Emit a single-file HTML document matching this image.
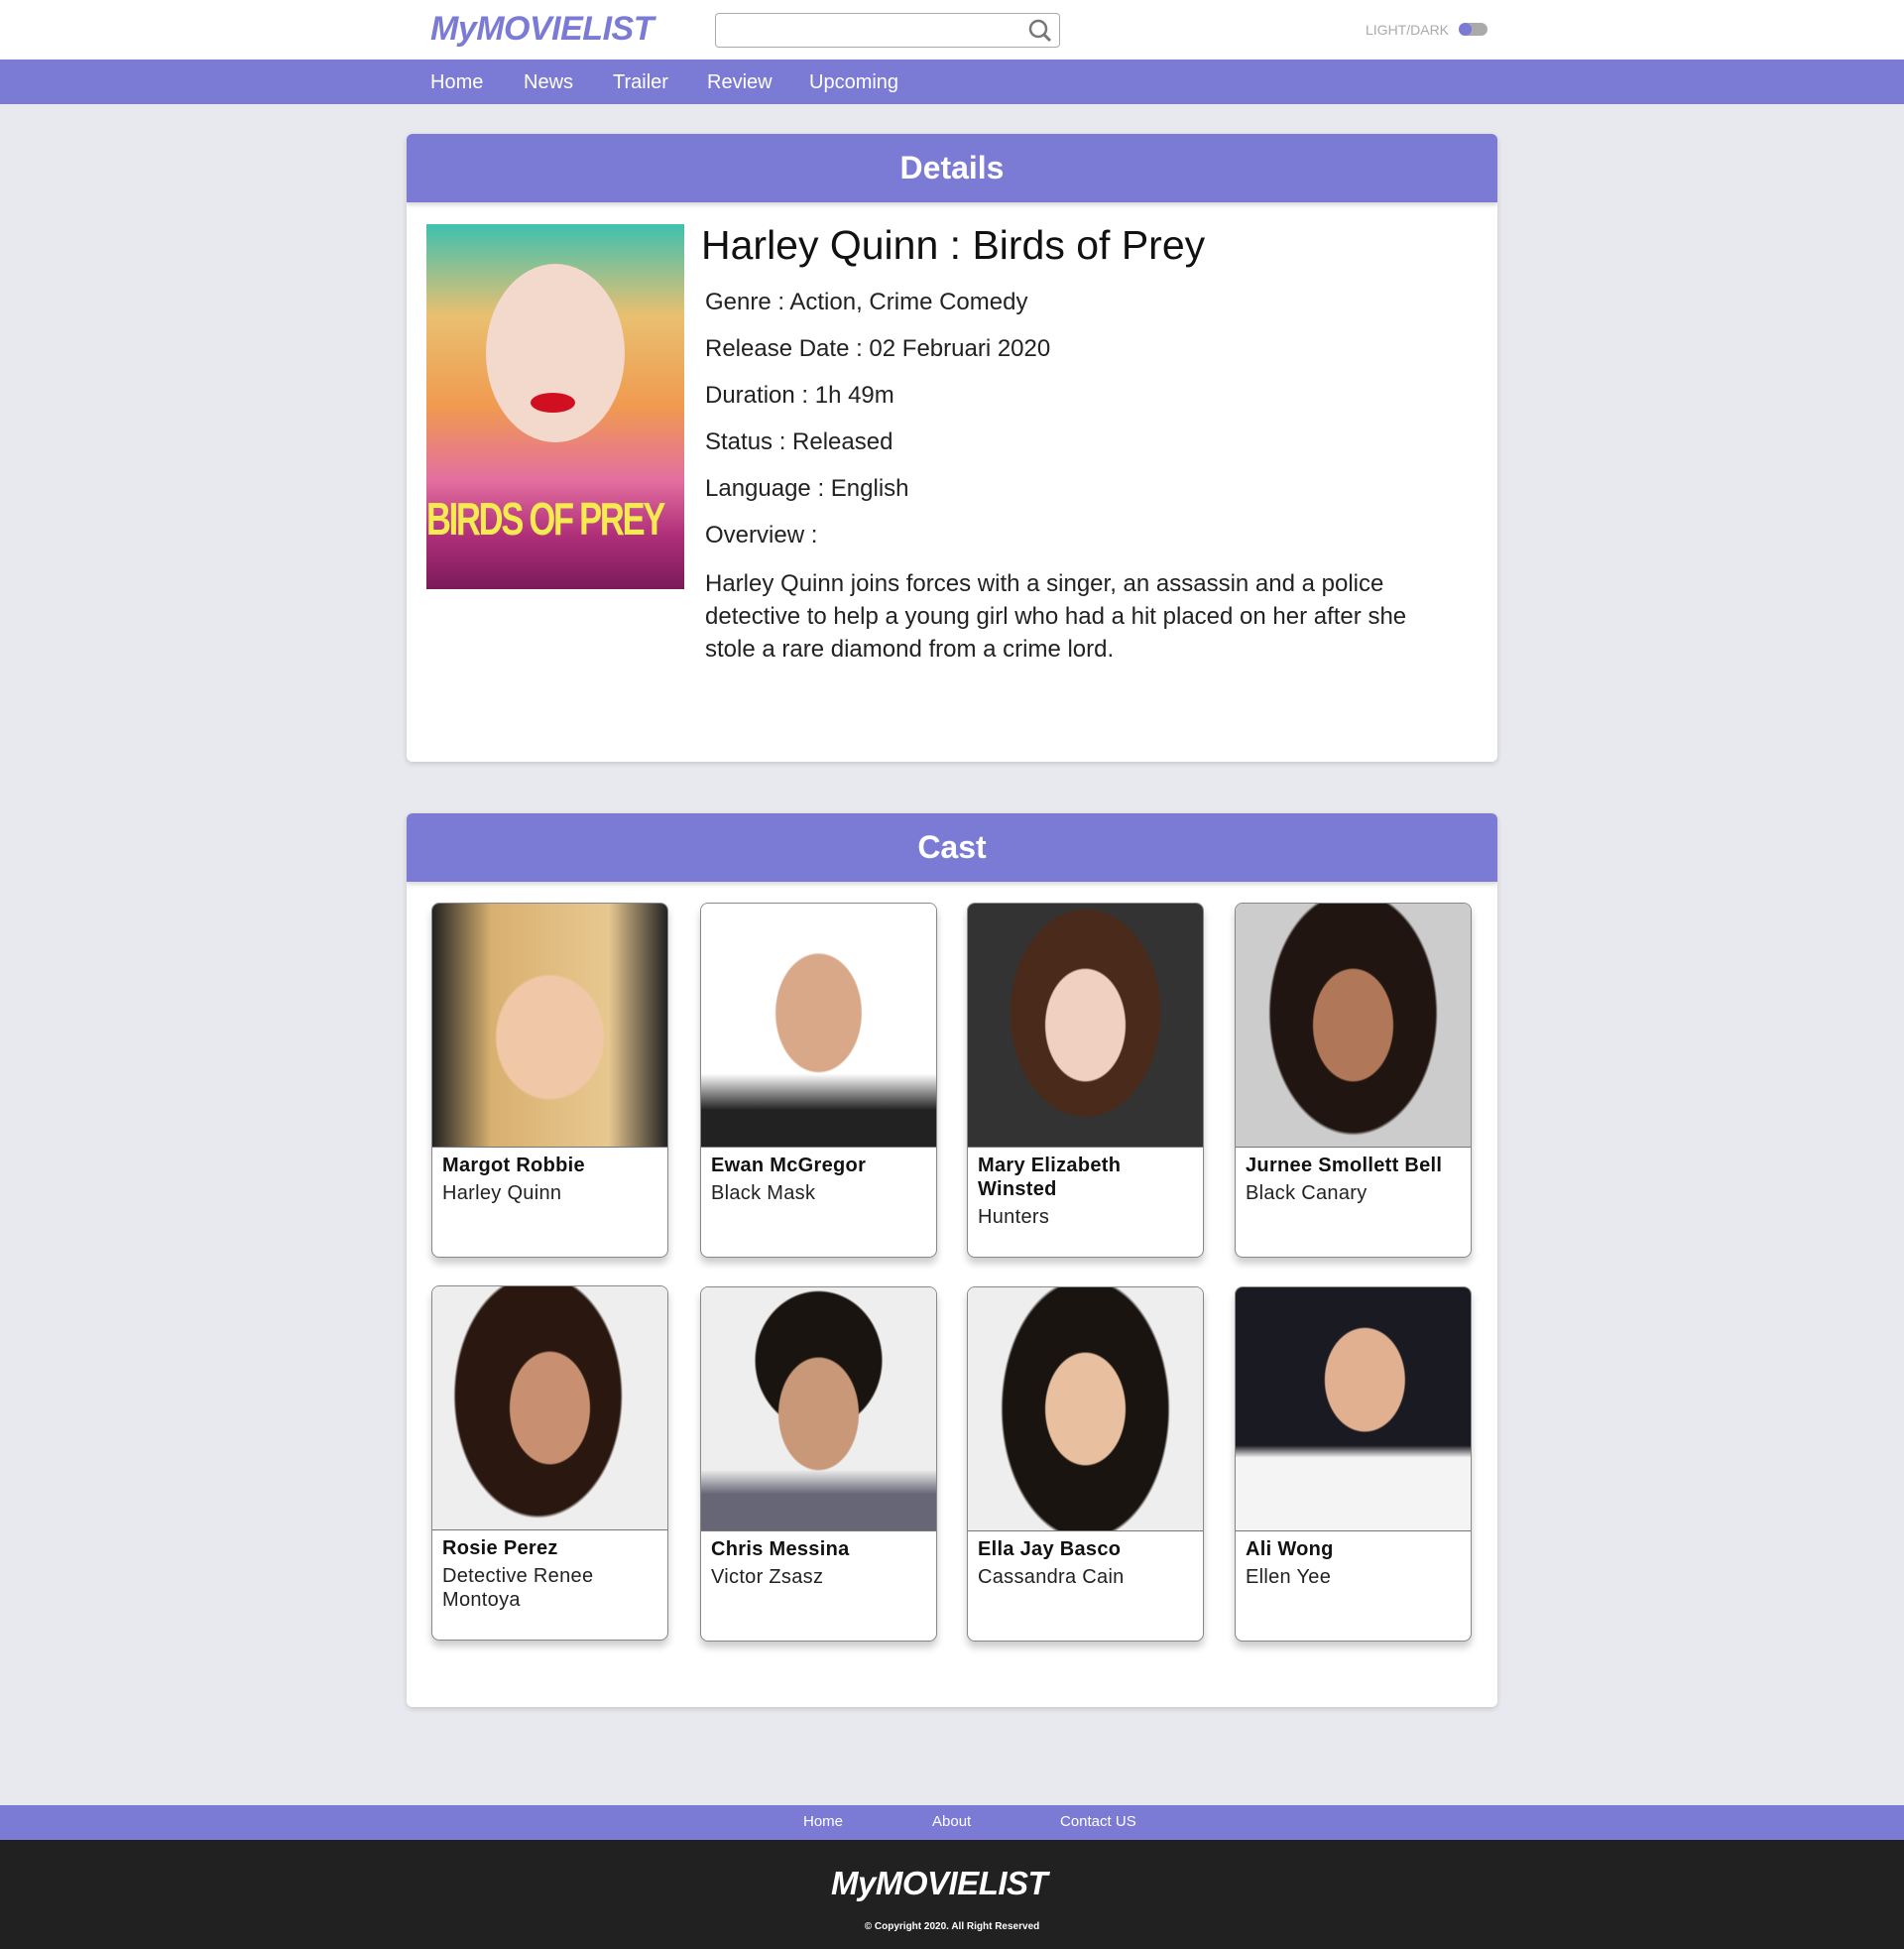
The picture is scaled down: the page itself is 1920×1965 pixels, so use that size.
<!DOCTYPE html>
<html><head><meta charset="utf-8"><style>
*{margin:0;padding:0;box-sizing:border-box}
body{width:1920px;height:1965px;background:#e8e9ee;position:relative;font-family:"Liberation Sans",sans-serif;overflow:hidden}
.abs{position:absolute}
.top{left:0;top:0;width:1920px;height:60px;background:#fff}
.logo{font-family:"Liberation Sans",sans-serif;font-weight:bold;font-style:italic;color:#7b7bd6;letter-spacing:-0.5px;white-space:nowrap}
.nav{left:0;top:60px;width:1920px;height:45px;background:#7b7bd6}
.nav span{position:absolute;top:12px;color:#fff;font-size:20px}
.card{background:#fff;border-radius:6px;box-shadow:0 2px 6px rgba(0,0,0,.15);overflow:hidden}
.ch{height:69px;background:#7b7bd6;color:#fff;font-size:32px;font-weight:bold;text-align:center;line-height:69px;box-shadow:0 3px 4px rgba(0,0,0,.15)}
.info{position:absolute;left:711px;font-size:24px;color:#222}
.cast{position:absolute;width:239px;height:358px;background:#fff;border:1px solid #888;border-radius:8px;overflow:hidden;box-shadow:0 6px 8px rgba(0,0,0,.2)}
.cast .img{height:246px;border-bottom:1px solid #777}
.cast b{display:block;margin:6px 0 0 10px;width:205px;font-size:20px;color:#111;line-height:24px;letter-spacing:0.3px}
.cast i{display:block;font-style:normal;margin:4px 0 0 10px;font-size:20px;color:#222;line-height:24px;letter-spacing:0.3px}
.foot{left:0;top:1820px;width:1920px;height:35px;background:#7b7bd6}
.foot span{position:absolute;top:8px;color:#fff;font-size:15px}
.black{left:0;top:1855px;width:1920px;height:110px;background:#212121}
</style></head><body>
<div class="abs top"></div>
<div class="abs logo" style="left:434px;top:10px;font-size:34px">MyMOVIELIST</div>
<div class="abs" style="left:721px;top:13px;width:348px;height:35px;border:1px solid #aaa;border-radius:4px;background:#fff"></div>
<svg class="abs" style="left:1036px;top:18px" width="26" height="26" viewBox="0 0 26 26"><circle cx="11" cy="11" r="8" fill="none" stroke="#777" stroke-width="2.5"/><path d="M17 17l6 6" stroke="#777" stroke-width="3"/></svg>
<div class="abs" style="left:1377px;top:22px;font-size:14px;color:#aaa">LIGHT/DARK</div>
<div class="abs" style="left:1471px;top:23px;width:29px;height:13px;border-radius:7px;background:#aaa"></div>
<div class="abs" style="left:1471px;top:23px;width:13px;height:13px;border-radius:7px;background:#7b7bd6"></div>
<div class="abs nav"><span style="left:434px">Home</span><span style="left:528px">News</span><span style="left:618px">Trailer</span><span style="left:713px">Review</span><span style="left:816px">Upcoming</span></div>

<div class="abs card" style="left:410px;top:135px;width:1100px;height:633px"><div class="ch">Details</div></div>
<div class="abs" style="left:430px;top:226px;width:260px;height:368px;overflow:hidden;background:linear-gradient(180deg,#3ec0b0 0%,#e9c070 25%,#f09a50 50%,#e46fa0 70%,#b0307a 85%,#7a1a5a 100%)">
<div style="position:absolute;left:60px;top:40px;width:140px;height:180px;border-radius:50%;background:#f3d8cc"></div>
<div style="position:absolute;left:105px;top:170px;width:45px;height:20px;border-radius:50%;background:#d01020"></div>
<div style="position:absolute;left:0;top:270px;width:260px;font:bold 46px 'Liberation Sans Narrow','Liberation Sans',sans-serif;color:#f5ea50;letter-spacing:-3px;white-space:nowrap;transform:scaleX(0.75);transform-origin:left">BIRDS OF PREY</div>
</div>
<div class="abs" style="left:707px;top:224px;font-size:41px;color:#111">Harley Quinn : Birds of Prey</div>
<div class="info" style="top:291px">Genre : Action, Crime Comedy</div>
<div class="info" style="top:338px">Release Date : 02 Februari 2020</div>
<div class="info" style="top:385px">Duration : 1h 49m</div>
<div class="info" style="top:432px">Status : Released</div>
<div class="info" style="top:479px">Language : English</div>
<div class="info" style="top:526px">Overview :</div>
<div class="info" style="top:572px;width:760px;line-height:33px">Harley Quinn joins forces with a singer, an assassin and a police detective to help a young girl who had a hit placed on her after she stole a rare diamond from a crime lord.</div>

<div class="abs card" style="left:410px;top:820px;width:1100px;height:901px"><div class="ch">Cast</div></div>

<div class="cast" style="left:435px;top:910px"><div class="img" style="background:radial-gradient(ellipse 45% 50% at 50% 55%,#f0c8a8 50%,transparent 52%),linear-gradient(90deg,#222 0,#d8b070 25%,#e8c890 75%,#222 100%)"></div><b>Margot Robbie</b><i>Harley Quinn</i></div>
<div class="cast" style="left:706px;top:910px"><div class="img" style="background:radial-gradient(ellipse 30% 40% at 50% 45%,#d8a888 60%,transparent 62%),linear-gradient(180deg,#fff 70%,#222 85%)"></div><b>Ewan McGregor</b><i>Black Mask</i></div>
<div class="cast" style="left:975px;top:910px"><div class="img" style="background:radial-gradient(ellipse 28% 38% at 50% 50%,#f0d0c0 60%,transparent 62%),radial-gradient(ellipse 45% 60% at 50% 45%,#4a2a1a 70%,transparent 72%),#333"></div><b>Mary Elizabeth Winsted</b><i>Hunters</i></div>
<div class="cast" style="left:1245px;top:910px"><div class="img" style="background:radial-gradient(ellipse 28% 38% at 50% 50%,#b07858 60%,transparent 62%),radial-gradient(ellipse 50% 70% at 50% 45%,#201510 70%,transparent 72%),#ccc"></div><b>Jurnee Smollett Bell</b><i>Black Canary</i></div>

<div class="cast" style="left:435px;top:1296px"><div class="img" style="background:radial-gradient(ellipse 28% 38% at 50% 50%,#c89070 60%,transparent 62%),radial-gradient(ellipse 50% 70% at 45% 45%,#2a1810 70%,transparent 72%),#eee"></div><b>Rosie Perez</b><i>Detective Renee Montoya</i></div>
<div class="cast" style="left:706px;top:1297px"><div class="img" style="background:radial-gradient(ellipse 28% 38% at 50% 52%,#c89878 60%,transparent 62%),radial-gradient(ellipse 38% 40% at 50% 30%,#1a1410 70%,transparent 72%),linear-gradient(180deg,#eee 75%,#667 85%)"></div><b>Chris Messina</b><i>Victor Zsasz</i></div>
<div class="cast" style="left:975px;top:1297px"><div class="img" style="background:radial-gradient(ellipse 28% 38% at 50% 50%,#e8c0a0 60%,transparent 62%),radial-gradient(ellipse 50% 75% at 50% 50%,#1a1410 70%,transparent 72%),#eee"></div><b>Ella Jay Basco</b><i>Cassandra Cain</i></div>
<div class="cast" style="left:1245px;top:1297px"><div class="img" style="background:radial-gradient(ellipse 28% 35% at 55% 38%,#e0b090 60%,transparent 62%),linear-gradient(180deg,transparent 65%,#f4f4f4 70%),#1a1a22"></div><b>Ali Wong</b><i>Ellen Yee</i></div>

<div class="abs foot"><span style="left:810px">Home</span><span style="left:940px">About</span><span style="left:1069px">Contact US</span></div>
<div class="abs black"></div>
<div class="abs logo" style="left:838px;top:1880px;font-size:33px;color:#fff">MyMOVIELIST</div>
<div class="abs" style="left:700px;top:1937px;width:520px;text-align:center;color:#fff;font-size:10px;font-weight:bold">© Copyright 2020. All Right Reserved</div>
</body></html>
